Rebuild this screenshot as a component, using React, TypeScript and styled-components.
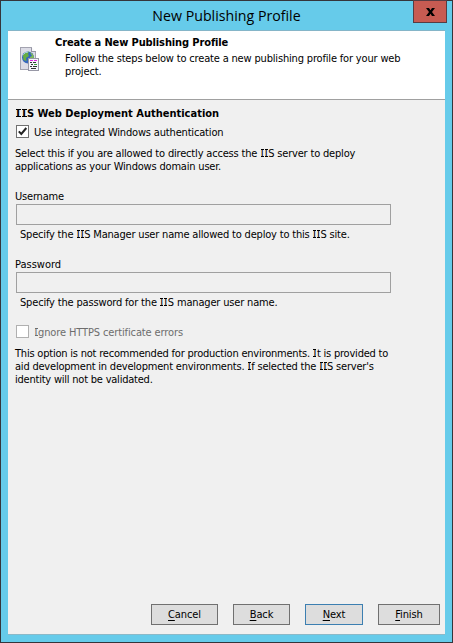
import React from "react";
import styled, { createGlobalStyle } from "styled-components";

const Global = createGlobalStyle`
  *, *::before, *::after { box-sizing: border-box; }
  body { margin: 0; }
`;

const Window = styled.div`
  width: 453px;
  height: 643px;
  display: flex;
  flex-direction: column;
  padding: 0 7px 7px;
  background: #66cbea;
  border: 1px solid #35353b;
  font: 11px/13px "DejaVu Sans Condensed", "DejaVu Sans", sans-serif;
  font-stretch: condensed;
  color: #000;
`;

const TitleBar = styled.header`
  position: relative;
  height: 29px;
  flex: none;
  text-align: center;
  font: 14.2px/30px "Open Sans", sans-serif;
`;

const Close = styled.button`
  position: absolute;
  top: -1px;
  right: -2px;
  width: 34px;
  height: 23px;
  padding: 0;
  display: flex;
  align-items: center;
  justify-content: center;
  background: #c75b52;
  border: 1px solid #573c43;
`;

const Body = styled.main`
  flex: 1;
  display: flex;
  flex-direction: column;
  background: #f0f0f0;
  border-top: 1px solid #85b5c8;
  border-bottom: 1px solid #8bb9c8;
`;

const Banner = styled.section`
  height: 69px;
  flex: none;
  display: flex;
  background: #fff;
  border-bottom: 1px solid #a0a0a0;
  padding: 5px 0 0 12px;
`;

const IconBox = styled.div`
  width: 35px;
  padding-top: 11px;
`;

const Steps = styled.div`
  padding: 3px 0 0 10px;
`;

const Content = styled.section`
  flex: 1;
  padding: 7px 7px 0;
`;

const Line = styled.div<{ $ls?: number; $indent?: number }>`
  height: 13px;
  white-space: nowrap;
  letter-spacing: ${(p) => p.$ls ?? 0}px;
  padding-left: ${(p) => p.$indent ?? 0}px;
`;

const Heading = styled(Line)`
  font-weight: bold;
`;

/* Capital I with slab serifs: bars at cap height and on the baseline. */
const SerifI = styled.span<{ $bold?: boolean }>`
  display: inline-block;
  width: ${(p) => (p.$bold ? 6 : 4)}px;
  height: 13px;
  vertical-align: top;
  text-align: center;
  letter-spacing: 0;
  background:
    linear-gradient(currentColor, currentColor) 50% 2px / ${(p) => (p.$bold ? 5 : 3)}px 1px no-repeat,
    linear-gradient(currentColor, currentColor) 50% 9px / ${(p) => (p.$bold ? 5 : 3)}px 1px no-repeat;
`;

const CheckRow = styled.label<{ $muted?: boolean }>`
  display: flex;
  align-items: flex-start;
  gap: 5px;
  height: 13px;
  padding-left: 1px;
  color: ${(p) => (p.$muted ? "#6d6d6d" : "#000")};
`;

const CheckLabel = styled(Line)`
  margin-top: 1px;
`;

const Box = styled.span<{ $muted?: boolean }>`
  width: 13px;
  height: 13px;
  display: flex;
  background: #fff;
  border: 1px solid ${(p) => (p.$muted ? "#b0b0b0" : "#707070")};
`;

const Field = styled.input`
  display: block;
  width: 375px;
  height: 21px;
  margin: 1px 0 3px 1px;
  padding: 0 4px;
  background: #f0f0f0;
  border: 1px solid #a0a0a0;
`;

const Gap = styled.div<{ $h: number }>`
  height: ${(p) => p.$h}px;
`;

const Footer = styled.footer`
  display: flex;
  justify-content: flex-end;
  gap: 15px;
  padding: 0 5px 9px 0;
`;

const Button = styled.button<{ $w: number; $focus?: boolean }>`
  width: ${(p) => p.$w}px;
  height: 21px;
  padding: 0 0 1px;
  font: inherit;
  letter-spacing: -0.1px;
  color: #000;
  background: #dddddd;
  border: 1px solid ${(p) => (p.$focus ? "#3c7fb1" : "#707070")};
`;

const Key = styled.span`
  text-decoration: underline;
  text-decoration-thickness: 1px;
  text-underline-offset: 2px;
`;

const IIS = ({ bold }: { bold?: boolean }) => (
  <><SerifI $bold={bold}>I</SerifI><SerifI $bold={bold}>I</SerifI>S</>
);

const ProfileIcon = () => (
  <svg width="20" height="25" viewBox="0 0 20 25" shapeRendering="crispEdges">
    <path d="M0.5 .5H11.5L15.5 4.5V22.5H.5Z" fill="#dcdce6" stroke="#a3a3b0" />
    <path d="M11.5 .5V4.5H15.5" fill="#f8f8fb" stroke="#9696a4" />
    <g shapeRendering="geometricPrecision">
      <circle cx="8" cy="10.5" r="6" fill="#3567bd" />
      <path d="M3 8Q5 4 9 4.8L8 7 9 9 6 11 6.5 14 3.5 13Z" fill="#67ad43" />
      <path d="M10 5Q15 8 13.5 12L11 14 10 10 12 9Z" fill="#82bd51" />
      <path d="M3.3 7.5Q5 5 8 5" fill="none" stroke="#b4d8f4" />
    </g>
    <path d="M8.5 11.5H18.5V23.5H8.5Z" fill="#f5f5fa" stroke="#9898a6" />
    <path d="M10 13.5H13M14 13.5H17" stroke="#df25df" />
    <path d="M10 15.5H12M13 15.5H16" stroke="#333" />
    <path d="M11 17.5H13" stroke="#333" />
    <path d="M14 17.5H17" stroke="#39a039" />
    <path d="M10 19.5H12M13 19.5H17M11 21.5H16" stroke="#333" />
  </svg>
);

export default function App() {
  return (
    <>
      <Global />
      <Window>
        <TitleBar>
          New Publishing Profile
          <Close aria-label="Close">
            <svg width="9" height="8" viewBox="0 0 9 8">
              <path d="M0 0H3L4.5 2.2 6 0H9L6 4 9 8H6L4.5 5.8 3 8H0L3 4Z" fill="#000" />
            </svg>
          </Close>
        </TitleBar>
        <Body>
          <Banner>
            <IconBox><ProfileIcon /></IconBox>
            <div>
              <Heading $ls={-0.12}>Create a New Publishing Profile</Heading>
              <Steps>
                <Line $ls={-0.17}>Follow the steps below to create a new publishing profile for your web</Line>
                <Line $ls={-0.1}>project.</Line>
              </Steps>
            </div>
          </Banner>
          <Content>
            <Heading><IIS bold /> Web Deployment Authentication</Heading>
            <Gap $h={5} />
            <CheckRow>
              <Box>
                <svg width="11" height="11" viewBox="0 0 11 11">
                  <path d="M1.8 5.4L4.3 8 9.3 2" fill="none" stroke="#222" strokeWidth="2" />
                </svg>
              </Box>
              <CheckLabel $ls={-0.17}>Use integrated Windows authentication</CheckLabel>
            </CheckRow>
            <Gap $h={9} />
            <Line $ls={-0.18}>Select this if you are allowed to directly access the <IIS /> server to deploy</Line>
            <Line $ls={-0.19}>applications as your Windows domain user.</Line>
            <Gap $h={17} />
            <Line $ls={-0.2}>Username</Line>
            <Field disabled />
            <Line $indent={5} $ls={-0.19}>Specify the <IIS /> Manager user name allowed to deploy to this <IIS /> site.</Line>
            <Gap $h={17} />
            <Line>Password</Line>
            <Field disabled />
            <Line $indent={5} $ls={-0.17}>Specify the password for the <IIS /> manager user name.</Line>
            <Gap $h={16} />
            <CheckRow $muted>
              <Box $muted />
              <CheckLabel $ls={-0.12}><SerifI>I</SerifI>gnore HTTPS certificate errors</CheckLabel>
            </CheckRow>
            <Gap $h={9} />
            <Line $ls={-0.21}>This option is not recommended for production environments. <SerifI>I</SerifI>t is provided to</Line>
            <Line $ls={-0.21}>aid development in development environments. <SerifI>I</SerifI>f selected the <IIS /> server's</Line>
            <Line $ls={-0.22}>identity will not be validated.</Line>
          </Content>
          <Footer>
            <Button $w={67}><Key>C</Key>ancel</Button>
            <Button $w={57}><Key>B</Key>ack</Button>
            <Button $w={58} $focus><Key>N</Key>ext</Button>
            <Button $w={62}><Key>F</Key>inish</Button>
          </Footer>
        </Body>
      </Window>
    </>
  );
}
